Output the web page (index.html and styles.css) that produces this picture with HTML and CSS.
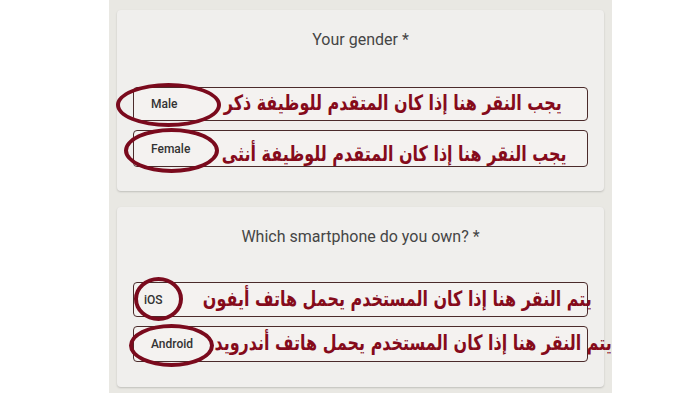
FILE: index.html
```html
<!DOCTYPE html>
<html lang="en">
<head>
<meta charset="utf-8">
<link rel="stylesheet" href="styles.css">
</head>
<body>
<main class="column">
  <section class="card">
    <h2 class="question">Your gender *</h2>
    <div class="options">
      <div class="option opt-male">
        <span class="ring"></span>
        <span class="label">Male</span>
        <span class="note" dir="rtl">يجب النقر هنا إذا كان المتقدم للوظيفة ذكر</span>
      </div>
      <div class="option opt-female">
        <span class="ring"></span>
        <span class="label">Female</span>
        <span class="note" dir="rtl">يجب النقر هنا إذا كان المتقدم للوظيفة أنثى</span>
      </div>
    </div>
  </section>
  <section class="card card-second">
    <h2 class="question">Which smartphone do you own? *</h2>
    <div class="options">
      <div class="option opt-ios">
        <span class="ring"></span>
        <span class="label">iOS</span>
        <span class="note" dir="rtl">يتم النقر هنا إذا كان المستخدم يحمل هاتف أيفون</span>
      </div>
      <div class="option opt-android">
        <span class="ring"></span>
        <span class="label">Android</span>
        <span class="note" dir="rtl">يتم النقر هنا إذا كان المستخدم يحمل هاتف أندرويد</span>
      </div>
    </div>
  </section>
</main>
</body>
</html>
```
FILE: styles.css
```css
html, body {
  margin: 0;
  padding: 0;
  background: #ffffff;
  height: 393px;
  overflow: hidden;
}
.column {
  margin-left: 109px;
  width: 503px;
  height: 393px;
  background: #e9e8e3;
  padding: 10px 8px 0;
  box-sizing: border-box;
  display: flex;
  flex-direction: column;
  gap: 16px;
}
.card {
  background: #f0efed;
  border-radius: 4px;
  box-shadow: 0 1px 2px rgba(0,0,0,0.18);
  padding: 21px 16px 24px;
}
.card-second {
  padding-bottom: 25px;
}
.question {
  margin: 0 0 38px;
  font-family: Roboto, "Liberation Sans", sans-serif;
  font-weight: 400;
  font-size: 16px;
  line-height: 18px;
  color: #454545;
  text-align: center;
}
.card-second .question {
  margin-bottom: 36px;
}
.options {
  display: flex;
  flex-direction: column;
  gap: 9px;
}
.option {
  position: relative;
  height: 34px;
  border: 1px solid #4b2b2b;
  border-radius: 4px;
  background: #f4f2f0;
  box-sizing: border-box;
  display: flex;
  align-items: center;
  padding-left: 17px;
}
.opt-female { height: 37px; }
.opt-ios { height: 35px; padding-left: 10px; }
.opt-android { height: 36px; }
.label {
  font-family: Roboto, "Liberation Sans", sans-serif;
  font-weight: 500;
  font-size: 12px;
  color: #333333;
  position: relative;
}
.note {
  position: absolute;
  font-family: "DejaVu Sans", sans-serif;
  font-weight: bold;
  font-size: 21px;
  color: #850b1b;
  white-space: nowrap;
  line-height: 24px;
  transform-origin: right center;
  transform: scaleX(0.76);
}
.opt-male .note { right: 25px; top: 3px; }
.opt-female .note { right: 20px; top: 11px; }
.opt-ios .note { right: -5px; top: 4px; }
.opt-android .note { right: -25px; top: 4px; }
.ring {
  position: absolute;
  border: 4px solid #7a0a1d;
  border-radius: 50%;
  box-sizing: border-box;
}
.opt-male .ring { left: -18px; top: -5px; width: 105px; height: 44px; }
.opt-female .ring { left: -10px; top: -3px; width: 95px; height: 45px; }
.opt-ios .ring { left: 0px; top: -6px; width: 49px; height: 44px; }
.opt-android .ring { left: -5px; top: -3px; width: 85px; height: 43px; }
```
